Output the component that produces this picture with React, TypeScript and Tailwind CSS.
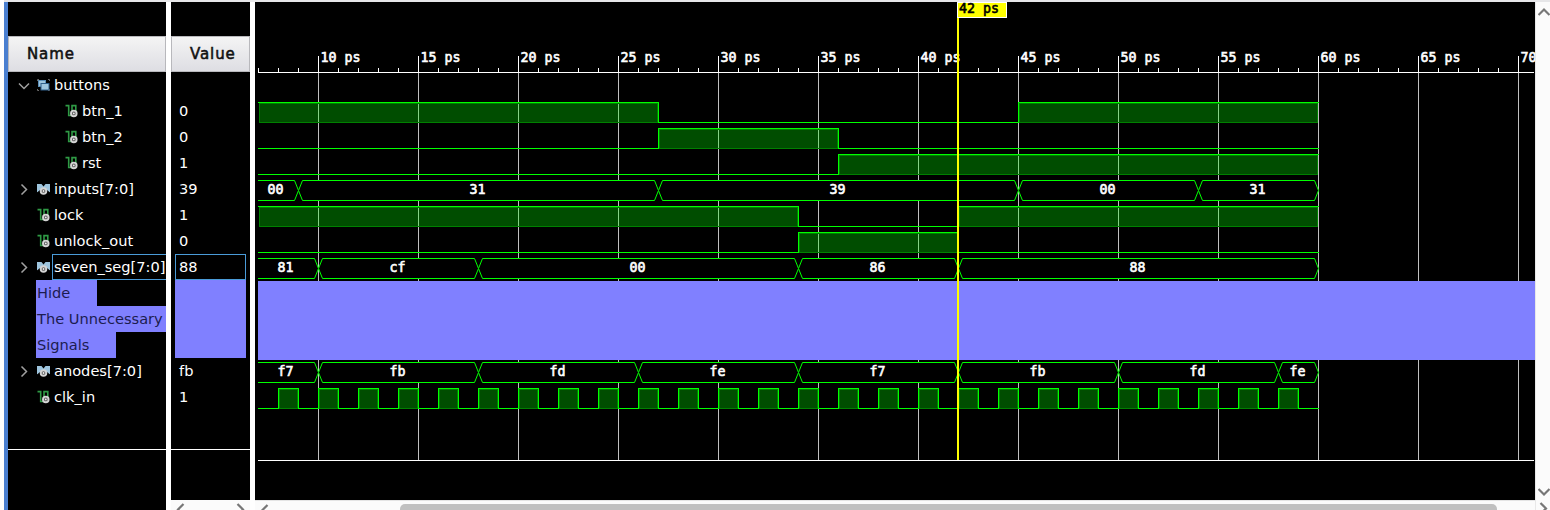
import React from "react";

const X = (t: number) => 20 * t - 140 + 0.5 + 3;

type Seg = [number, number];

const START = 6.85;

function Digital({ top, highs }: { top: number; highs: Seg[] }) {
  let level = highs[0][0] < 7;
  let d = `M0 ${top + (level ? 0.5 : 20.5)}`;
  highs.forEach(([a, b]) => {
    if (a >= 7) d += `H${X(a)}V${top + 0.5}`;
    d += `H${X(b)}`;
    if (b < 60) d += `V${top + 20.5}`;
    level = b >= 60;
  });
  if (!level) d += `H${X(60) + 0.5}`;
  return (
    <g fill="none" shapeRendering="crispEdges">
      {highs.map(([a, b]) => {
        const x = a < 7 ? 4.5 : X(a) + 1;
        return (
          <rect
            key={a}
            x={x}
            y={top + 1.5}
            width={X(b) - 1 - x}
            height={19}
            fill="#00ff00"
            fillOpacity={0.3}
            stroke="#008000"
          />
        );
      })}
      <path d={d} stroke="#00ff00" />
    </g>
  );
}

function Bus({ top, edges, labels }: { top: number; edges: number[]; labels: string[] }) {
  const t = top + 0.5;
  const m = top + 10.5;
  const b = top + 20.5;
  return (
    <g>
      {labels.map((label, i) => {
        const first = i === 0;
        const x0 = first ? 0 : X(edges[i - 1]);
        const x1 = X(edges[i]);
        const left = first ? `M0 ${b}V${t}` : `M${x0 + 4} ${b}L${x0} ${m}L${x0 + 4} ${t}`;
        const body = `H${x1 - 4}L${x1} ${m}L${x1 - 4} ${b}`;
        return (
          <g key={i}>
            <path d={left + body + "Z"} fill="#000" />
            <path d={first ? `M0 ${t}${body}H0` : left + body + "Z"} fill="none" stroke="#00ff00" />
            <text x={Math.round((x0 + x1) / 2) - 9.5} y={top + 14} fill="#fff" stroke="#fff">
              {label}
            </text>
          </g>
        );
      })}
    </g>
  );
}

const clock: Seg[] = Array.from({ length: 26 }, (_, i) => [8 + 2 * i, 9 + 2 * i] as Seg);

function Waves() {
  const ticks = Array.from({ length: 64 }, (_, i) => 7 + i);
  const major = ticks.filter((t) => t % 5 === 0);
  return (
    <svg
      width="1280"
      height="498"
      strokeWidth="1"
      className="block font-['DejaVu_Sans_Mono',monospace] text-[13.3px] [&_text]:[stroke-width:0.6px]"
    >
      <g shapeRendering="crispEdges">
        {major.map((t) => (
          <path key={t} d={`M${X(t)} 71V458`} stroke="#c0c0c0" />
        ))}
        {ticks.map((t) => (
          <path key={t} d={`M${X(t)} ${t % 5 === 0 ? 54 : 66}V71`} stroke="#fff" />
        ))}
        <path d="M3 70.5H1279M3 458.5H1279" stroke="#fff" />
      </g>
      {major.map((t) => (
        <text key={t} x={X(t) + 2} y="60" fill="#fff" stroke="#fff">{`${t} ps`}</text>
      ))}
      <svg x="3" y="0" width="1280" height="498" viewBox="3 0 1280 498" overflow="hidden">
        <g transform="translate(0 -2)">
          <Digital top={102} highs={[[START, 27], [45, 60]]} />
          <Digital top={128} highs={[[27, 36]]} />
          <Digital top={154} highs={[[36, 60]]} />
          <Bus top={180} edges={[9, 27, 45, 54, 60]} labels={["00", "31", "39", "00", "31"]} />
          <Digital top={206} highs={[[START, 34], [42, 60]]} />
          <Digital top={232} highs={[[34, 42]]} />
          <Bus top={258} edges={[10, 18, 34, 42, 60]} labels={["81", "cf", "00", "86", "88"]} />
          <rect x="3" y="281" width="1277" height="79" fill="#8080ff" />
          <Bus
            top={362}
            edges={[10, 18, 26, 34, 42, 50, 58, 60]}
            labels={["f7", "fb", "fd", "fe", "f7", "fb", "fd", "fe"]}
          />
          <Digital top={388} highs={clock} />
        </g>
      </svg>
      <rect x={X(42) - 1.5} y="0" width="2" height="458" fill="#ff0" />
      <rect x={X(42) - 1} y="0.5" width="49" height="15" fill="#ff0" stroke="#fff" />
      <text x={X(42) + 0.5} y="11" fill="#000" stroke="#000">42 ps</text>
    </svg>
  );
}

const groupIcon = (
  <svg width="14" height="14" viewBox="0 0 14 14" className="shrink-0" fill="none">
    <path d="M0.500 3V1.500H2M11 1.500H12.500V3M0.500 11V12.500H2M11 12.500H12.500V11" stroke="#6a6a6a" />
    <rect x="1.500" y="2.500" width="7" height="6" fill="#9ec5de" stroke="#5b8fb8" />
    <rect x="4" y="5.500" width="8" height="6.500" fill="#9ec5de" stroke="#2f5f8a" />
  </svg>
);

const gear = (
  <>
    <circle cx="8.800" cy="9.400" r="2.800" fill="#5c5c5c" stroke="#d4d4d4" strokeWidth="1.900" />
    <circle cx="8.800" cy="9.400" r="0.900" fill="#eee" />
  </>
);

const signalIcon = (
  <svg width="14" height="14" viewBox="0 0 14 14" className="shrink-0" fill="none">
    <path d="M0.500 1.600H3.700V11.500H6M7 8V1.600H10.800V7" stroke="#2f9a45" strokeWidth="1.600" />
    {gear}
  </svg>
);

const busIcon = (
  <svg width="14" height="14" viewBox="0 0 14 14" className="shrink-0" fill="none">
    <path d="M0 2H4.500L6.500 4.500L8.500 2H13V10.500H0Z" fill="#9ec5de" />
    <path d="M0 10.500L3 8V12H10V8L13 10.500V12H0Z" fill="#000" />
    <g transform="translate(-2.300 -0.400)">{gear}</g>
  </svg>
);

function Chevron({ open }: { open?: boolean }) {
  return (
    <svg width="12" height="12" viewBox="0 0 12 12" className="shrink-0" fill="none" stroke="#a0a0a0" strokeWidth="1.500">
      <path d={open ? "M1 4.500L6 9.500L11 4.500" : "M3.500 1.500L8.500 6.500L3.500 11.500"} />
    </svg>
  );
}

type Row = {
  name: string;
  value?: string;
  icon?: React.ReactNode;
  arrow?: "open" | "closed";
  child?: boolean;
  selected?: boolean;
  divider?: string;
};

const rows: Row[] = [
  { name: "buttons", icon: groupIcon, arrow: "open" },
  { name: "btn_1", value: "0", icon: signalIcon, child: true },
  { name: "btn_2", value: "0", icon: signalIcon, child: true },
  { name: "rst", value: "1", icon: signalIcon, child: true },
  { name: "inputs[7:0]", value: "39", icon: busIcon, arrow: "closed" },
  { name: "lock", value: "1", icon: signalIcon },
  { name: "unlock_out", value: "0", icon: signalIcon },
  { name: "seven_seg[7:0]", value: "88", icon: busIcon, arrow: "closed", selected: true },
  { name: "Hide", divider: "w-[61px]" },
  { name: "The Unnecessary", divider: "w-[140px]" },
  { name: "Signals", divider: "w-[80px]" },
  { name: "anodes[7:0]", value: "fb", icon: busIcon, arrow: "closed" },
  { name: "clk_in", value: "1", icon: signalIcon },
];

function NameRow({ row }: { row: Row }) {
  if (row.divider) {
    return (
      <div className="flex h-[26px] shrink-0 pl-7">
        <div
          className={`${row.divider} h-[26px] shrink-0 overflow-hidden bg-[#8080ff] pl-px leading-[26px] whitespace-nowrap text-[#1c1c50]`}
        >
          {row.name}
        </div>
      </div>
    );
  }
  return (
    <div className={`flex h-[26px] shrink-0 items-center ${row.child ? "pl-[57px]" : "pl-[10px]"}`}>
      {!row.child && (
        <div className="mr-[7px] flex h-3 w-3 shrink-0">{row.arrow && <Chevron open={row.arrow === "open"} />}</div>
      )}
      {row.icon}
      <div
        className={`ml-px h-[26px] shrink-0 border pl-px leading-6 ${row.selected ? "w-[120px] border-[#4a9bd8]" : "border-transparent"}`}
      >
        {row.name}
      </div>
    </div>
  );
}

function Header({ children }: { children: React.ReactNode }) {
  return (
    <div className="mt-[34px] h-9 shrink-0 border border-[#b8b8bc] bg-linear-to-b from-[#f4f4f4] to-[#dedee3] pl-[18px] text-[15px] leading-[35px] tracking-[0.9px] text-[#111] [-webkit-text-stroke:0.55px_#111]">
      {children}
    </div>
  );
}

function ScrollArrow({ d }: { d: string }) {
  return (
    <svg width="12" height="12" viewBox="0 0 12 12" className="shrink-0" fill="none" stroke="#777" strokeWidth="2.200">
      <path d={d} />
    </svg>
  );
}

const LEFT = "M9.500 1L4 6.500L9.500 12";
const RIGHT = "M2.500 1L8 6.500L2.500 12";

export default function App() {
  return (
    <div className="flex h-[510px] w-[1550px] flex-col overflow-hidden bg-white font-['DejaVu_Sans',sans-serif] text-[14.6px] text-white">
      <div className="ml-1 h-[2px] shrink-0 bg-[#e6e6e8]" />
      <div className="flex h-[508px]">
        <div className="ml-1 w-1 bg-[#4a7fd0]" />
        <div className="flex w-[158px] flex-col overflow-hidden bg-black">
          <Header>Name</Header>
          {rows.map((r) => (
            <NameRow key={r.name} row={r} />
          ))}
          <div className="mt-[39px] h-px shrink-0 bg-white" />
        </div>
        <div className="ml-[5px] flex w-[79px] flex-col bg-black">
          <Header>Value</Header>
          {rows.map((r) => (
            <div key={r.name} className="flex h-[26px] px-1">
              <div
                className={`h-[26px] w-[71px] border pl-[3px] leading-6 ${r.selected ? "border-[#4a9bd8]" : r.divider ? "border-[#8080ff] bg-[#8080ff]" : "border-transparent"}`}
              >
                {r.value}
              </div>
            </div>
          ))}
          <div className="mt-[39px] h-px shrink-0 bg-white" />
          <div className="mt-[50px] flex h-[10px] justify-between overflow-hidden bg-[#fbfbfb] px-[3px] pt-[3px]">
            <ScrollArrow d={LEFT} />
            <ScrollArrow d={RIGHT} />
          </div>
        </div>
        <div className="ml-[5px] flex w-[1280px] flex-col overflow-hidden bg-black">
          <Waves />
          <div className="flex h-[10px] overflow-hidden border-t border-[#e4e4e4] bg-[#fbfbfb] pt-[3px] pl-[3px]">
            <ScrollArrow d={LEFT} />
            <div className="ml-[130px] h-[10px] w-[1097px] shrink-0 rounded-t-[5px] bg-[#c0c0c0]" />
          </div>
        </div>
        <div className="flex w-[15px] flex-col items-end overflow-hidden border-l border-[#e8e8e8] bg-[#fbfbfb]">
          <div className="mt-[3px] h-3 w-3">
            <ScrollArrow d="M0.500 10L6 4.500L11.500 10" />
          </div>
          <div className="mt-[469px] h-3 w-3">
            <ScrollArrow d="M0.500 3L6 8.500L11.500 3" />
          </div>
          <div className="mt-1 h-3 w-3">
            <ScrollArrow d={RIGHT} />
          </div>
        </div>
      </div>
    </div>
  );
}
